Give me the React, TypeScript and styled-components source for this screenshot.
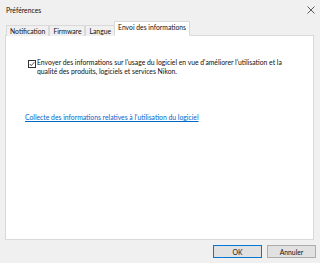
import React from "react";
import styled, { createGlobalStyle } from "styled-components";

const FONT = `"Lato", "Noto Sans", sans-serif`;

const Global = createGlobalStyle`
  html, body { margin: 0; padding: 0; }
  body {
    background: #f0f0f0;
    font-family: ${FONT};
    color: #111;
  }
`;

const Window = styled.div`
  width: 320px;
  height: 263px;
  background: #f0f0f0;
  display: flex;
  flex-direction: column;
  box-sizing: border-box;
  font-size: 6.8px;
`;

const TitleBar = styled.div`
  height: 19px;
  display: flex;
  align-items: center;
  justify-content: space-between;
  padding: 0 4px 0 6px;
  box-sizing: border-box;
`;

const Title = styled.span`
  color: #111;
`;

const CloseBtn = styled.div`
  width: 10px;
  height: 10px;
  display: flex;
  align-items: center;
  justify-content: center;
`;

const TabStrip = styled.div`
  display: flex;
  align-items: flex-end;
  margin-left: 6px;
  height: 15px;
  margin-top: 2px;
  position: relative;
  z-index: 1;
`;

const Tab = styled.div<{ $active?: boolean }>`
  box-sizing: border-box;
  height: ${(p) => (p.$active ? "15px" : "11px")};
  padding: 0 3px;
  margin-left: ${(p) => (p.$active ? "-1px" : "0")};
  display: flex;
  align-items: center;
  background: ${(p) => (p.$active ? "#ffffff" : "#f0f0f0")};
  border: 1px solid #d9d9d9;
  border-bottom: ${(p) => (p.$active ? "1px solid #ffffff" : "none")};
  & + & {
    border-left: ${(p) => (p.$active ? "1px solid #d9d9d9" : "none")};
  }
  padding-bottom: ${(p) => (p.$active ? "3px" : "0")};
  white-space: nowrap;
`;

const Panel = styled.div`
  margin: -1px 6px 0 5px;
  height: 205px;
  background: #fff;
  border: 1px solid #d9d9d9;
  box-sizing: border-box;
  padding: 22px 14px 0 22px;
  display: flex;
  flex-direction: column;
`;

const CheckRow = styled.label`
  display: flex;
  align-items: flex-start;
  gap: 1px;
  line-height: 9px;
`;

const Box = styled.span`
  flex: none;
  width: 8px;
  height: 8px;
  margin-top: 2px;
  box-sizing: border-box;
  border: 1px solid #333;
  display: flex;
  align-items: center;
  justify-content: center;
  background: #fff;
`;

const Text = styled.span`
  max-width: 252px;
`;

const Link = styled.a`
  margin-top: 37px;
  margin-left: -3px;
  color: #0066cc;
  text-decoration: underline;
  cursor: pointer;
`;

const Footer = styled.div`
  display: flex;
  justify-content: flex-end;
  gap: 5px;
  padding: 5px 4px 0 0;
`;

const Button = styled.button<{ $default?: boolean }>`
  width: 49px;
  height: 13px;
  box-sizing: border-box;
  background: #e1e1e1;
  border: 1px solid ${(p) => (p.$default ? "#0078d7" : "#adadad")};
  font-family: ${FONT};
  font-size: 6.8px;
  padding: 0;
  color: #111;
  display: flex;
  align-items: center;
  justify-content: center;
`;

export default function App() {
  return (
    <>
      <Global />
      <Window>
        <TitleBar>
          <Title>Préférences</Title>
          <CloseBtn>
            <svg width="8" height="8" viewBox="0 0 8 8">
              <path d="M0.5 0.5 L7.5 7.5 M7.5 0.5 L0.5 7.5" stroke="#333" strokeWidth="0.8" fill="none" />
            </svg>
          </CloseBtn>
        </TitleBar>
        <TabStrip>
          <Tab>Notification</Tab>
          <Tab>Firmware</Tab>
          <Tab>Langue</Tab>
          <Tab $active>Envoi des informations</Tab>
        </TabStrip>
        <Panel>
          <CheckRow>
            <Box>
              <svg width="6" height="6" viewBox="0 0 6 6">
                <path d="M0.8 3 L2.3 4.6 L5.3 1.2" stroke="#222" strokeWidth="0.8" fill="none" />
              </svg>
            </Box>
            <Text>
              Envoyer des informations sur l'usage du logiciel en vue d'améliorer l'utilisation et la qualité des produits, logiciels et services Nikon.
            </Text>
          </CheckRow>
          <Link>Collecte des informations relatives à l'utilisation du logiciel</Link>
        </Panel>
        <Footer>
          <Button $default>OK</Button>
          <Button>Annuler</Button>
        </Footer>
      </Window>
    </>
  );
}
